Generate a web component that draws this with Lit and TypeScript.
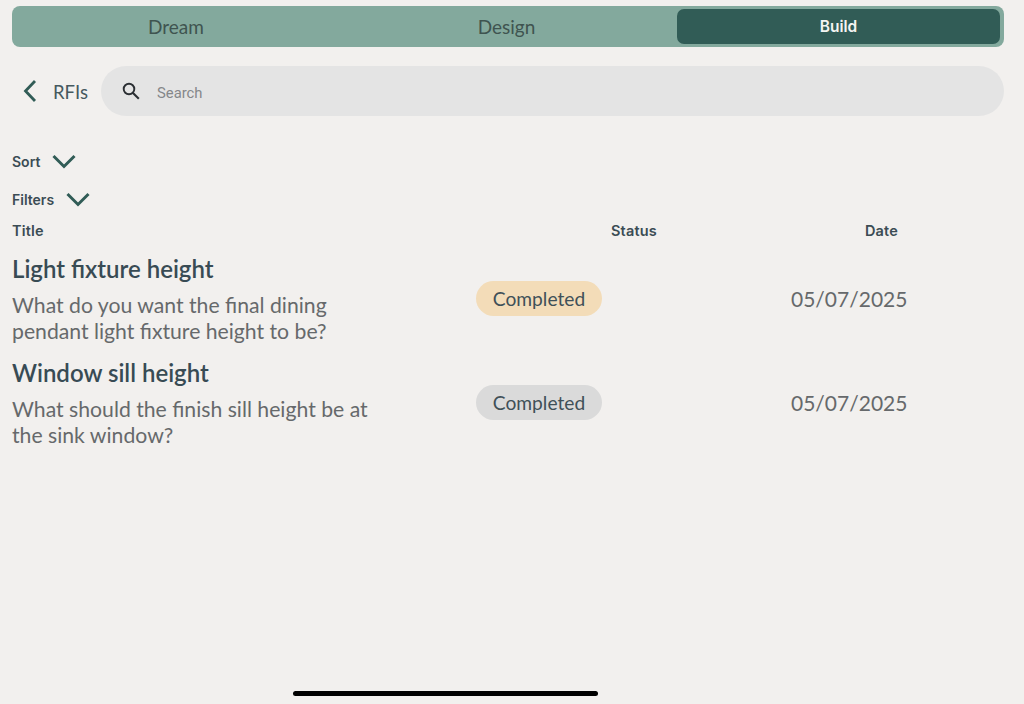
import { LitElement, html, css, svg } from 'lit';
import { customElement } from 'lit/decorators.js';

interface Rfi {
  title: string;
  body: string[];
  tone: string;
  date: string;
}

const RFIS: Rfi[] = [
  {
    title: 'Light fixture height',
    body: ['What do you want the final dining', 'pendant light fixture height to be?'],
    tone: 'amber',
    date: '05/07/2025',
  },
  {
    title: 'Window sill height',
    body: ['What should the finish sill height be at', 'the sink window?'],
    tone: 'grey',
    date: '05/07/2025',
  },
];

const chevronDown = svg`<path d="M1.5 2 L12 12.5 L22.5 2" fill="none" stroke="#315c56" stroke-width="3" />`;

@customElement('app-root')
export class AppRoot extends LitElement {
  static styles = css`
    :host {
      display: block;
      position: relative;
      height: 704px;
      overflow: hidden;
      background: #f2f0ee;
      font-family: 'Lato', 'Liberation Sans', sans-serif;
      color: #36474f;
    }

    .page {
      padding: 6px 20px 0 12px;
    }

    .tabs {
      display: grid;
      grid-template-columns: 320px 341px 323px;
      height: 41px;
      padding: 3px 4px;
      box-sizing: border-box;
      background: #83a99d;
      border-radius: 8px;
    }

    .tab {
      display: flex;
      align-items: center;
      justify-content: center;
      font-size: 19px;
      color: #3f5450;
      border-radius: 7px;
    }

    .tab.active {
      background: #315c56;
      color: #f4f4f2;
      font-family: 'Inter', sans-serif;
      font-size: 15.5px;
      font-weight: 600;
    }

    .search-row {
      display: flex;
      align-items: center;
      margin-top: 19px;
    }

    .back {
      display: block;
      margin-left: 11px;
    }

    .rfis {
      margin-left: 16px;
      padding-top: 1px;
      width: 48px;
      font-size: 18.5px;
      color: #46595f;
    }

    .search {
      flex: 1;
      display: flex;
      align-items: center;
      height: 50px;
      padding-left: 21px;
      background: #e4e4e4;
      border-radius: 25px;
    }

    .search span {
      margin-left: 17px;
      padding-top: 3px;
      font-family: 'Roboto', sans-serif;
      font-size: 14.8px;
      color: #85878a;
    }

    .control {
      display: flex;
      align-items: center;
      gap: 12px;
      height: 20px;
      font-family: 'Inter', sans-serif;
      font-size: 14px;
      font-weight: 600;
      color: #3b4c54;
    }

    .control.sort {
      margin-top: 35px;
    }

    .control.filters {
      margin-top: 18px;
    }

    .grid {
      display: grid;
      grid-template-columns: 464px 315px 1fr;
    }

    .head {
      margin-top: 11px;
      height: 20px;
      align-items: center;
      font-family: 'Inter', sans-serif;
      font-size: 14.5px;
      font-weight: 600;
      letter-spacing: 0.15px;
      color: #3b4c54;
    }

    .head .status {
      padding-left: 135px;
    }

    .head .date {
      padding-left: 74px;
    }

    .row {
      height: 104px;
    }

    .row.first {
      margin-top: 13px;
    }

    .title {
      margin: 0;
      height: 32px;
      line-height: 32px;
      font-size: 24px;
      font-weight: 600;
      color: #384b54;
    }

    .body {
      margin-top: 7px;
      font-size: 21.2px;
      line-height: 26px;
      color: #66696b;
    }

    .pill {
      display: inline-flex;
      align-items: center;
      justify-content: center;
      width: 126px;
      height: 35px;
      margin-top: 28px;
      border-radius: 18px;
      font-size: 19.2px;
      color: #3f5058;
    }

    .pill.amber {
      background: #f3dcb8;
    }

    .pill.grey {
      background: #dadada;
    }

    .when {
      margin-top: 28px;
      height: 35px;
      line-height: 35px;
      font-size: 21px;
      color: #66696b;
    }

    .home-bar {
      position: absolute;
      left: 293px;
      top: 691px;
      width: 305px;
      height: 5px;
      border-radius: 3px;
      background: #000;
    }
  `;

  private renderRow(rfi: Rfi, index: number) {
    return html`
      <div class="grid row ${index === 0 ? 'first' : ''}">
        <div>
          <h2 class="title">${rfi.title}</h2>
          <div class="body">${rfi.body.map((line) => html`<div>${line}</div>`)}</div>
        </div>
        <div><span class="pill ${rfi.tone}">Completed</span></div>
        <div class="when">${rfi.date}</div>
      </div>
    `;
  }

  render() {
    return html`
      <div class="page">
        <div class="tabs">
          <div class="tab">Dream</div>
          <div class="tab">Design</div>
          <div class="tab active">Build</div>
        </div>

        <div class="search-row">
          <svg class="back" width="14" height="24" viewBox="0 0 14 24">
            <path d="M12 2 L2.5 12 L12 22" fill="none" stroke="#315c56" stroke-width="2.8" />
          </svg>
          <span class="rfis">RFIs</span>
          <div class="search">
            <svg width="18" height="18" viewBox="0 0 18 18">
              <circle cx="7" cy="7" r="5.3" fill="none" stroke="#2b2f33" stroke-width="1.9" />
              <path d="M11 11 L16.8 16.8" stroke="#2b2f33" stroke-width="2.1" />
            </svg>
            <span>Search</span>
          </div>
        </div>

        <div class="control sort">
          Sort
          <svg width="24" height="15" viewBox="0 0 24 15">${chevronDown}</svg>
        </div>
        <div class="control filters">
          Filters
          <svg width="24" height="15" viewBox="0 0 24 15">${chevronDown}</svg>
        </div>

        <div class="grid head">
          <div>Title</div>
          <div class="status">Status</div>
          <div class="date">Date</div>
        </div>

        ${RFIS.map((rfi, i) => this.renderRow(rfi, i))}
      </div>
      <div class="home-bar"></div>
    `;
  }
}
